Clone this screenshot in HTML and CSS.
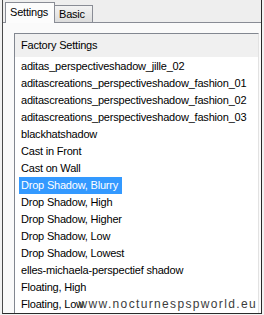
FILE: index.html
```html
<!DOCTYPE html>
<html>
<head>
<meta charset="utf-8">
<link rel="stylesheet" href="styles.css">
</head>
<body>
<div class="window">
  <div class="tabs">
    <div class="tab active">Settings</div>
    <div class="tab">Basic</div>
  </div>
  <div class="panel">
    <div class="list">
      <div class="header">Factory Settings</div>
      <div class="items">
        <div class="item"><span>aditas_perspectiveshadow_jille_02</span></div>
        <div class="item"><span>aditascreations_perspectiveshadow_fashion_01</span></div>
        <div class="item"><span>aditascreations_perspectiveshadow_fashion_02</span></div>
        <div class="item"><span>aditascreations_perspectiveshadow_fashion_03</span></div>
        <div class="item"><span>blackhatshadow</span></div>
        <div class="item"><span>Cast in Front</span></div>
        <div class="item"><span>Cast on Wall</span></div>
        <div class="item selected"><span>Drop Shadow, Blurry</span></div>
        <div class="item"><span>Drop Shadow, High</span></div>
        <div class="item"><span>Drop Shadow, Higher</span></div>
        <div class="item"><span>Drop Shadow, Low</span></div>
        <div class="item"><span>Drop Shadow, Lowest</span></div>
        <div class="item"><span>elles-michaela-perspectief shadow</span></div>
        <div class="item"><span>Floating, High</span></div>
        <div class="item"><span>Floating, Low</span></div>
      </div>
    </div>
  </div>
  <div class="watermark">www.nocturnespspworld.eu</div>
</div>
</body>
</html>
```
FILE: styles.css
```css
html, body {
  margin: 0;
  padding: 0;
}
body {
  width: 264px;
  height: 315px;
  background: #f2f2f2;
  overflow: hidden;
  font-family: "Liberation Sans", Arial, sans-serif;
  font-size: 11px;
  letter-spacing: -0.2px;
  color: #000;
}
.window {
  position: relative;
  margin-left: 2px;
  width: 258px;
  height: 313px;
  border-left: 1px solid #4a4a4a;
  border-right: 1px solid #2a2a2a;
  border-bottom: 1px solid #2a2a2a;
  background: #eeeeee;
  display: flex;
  flex-direction: column;
  overflow: hidden;
}
.tabs {
  height: 22px;
  display: flex;
  align-items: flex-end;
  padding-left: 2px;
  position: relative;
  z-index: 2;
}
.tab {
  box-sizing: border-box;
  height: 17px;
  width: 38px;
  border: 1px solid #898c95;
  border-bottom: none;
  border-left: none;
  background: linear-gradient(#f3f3f3, #dcdcdc);
  padding-left: 4px;
  line-height: 16px;
}
.tab.active {
  height: 21px;
  width: 50px;
  margin-bottom: -1px;
  border-left: 1px solid #898c95;
  border-right: 1px solid #898c95;
  background: #fcfcfc;
  padding-left: 4px;
  line-height: 19px;
}
.panel {
  flex: 1;
  border-top: 1px solid #898c95;
  background: #fafafa;
  padding: 10px 0 0 11px;
  display: flex;
  flex-direction: column;
  min-height: 0;
}
.list {
  flex: 1;
  width: 243px;
  border-left: 1px solid #828790;
  border-top: 1px solid #828790;
  border-right: 1px solid #e2e2e2;
  background: #fff;
  display: flex;
  flex-direction: column;
  min-height: 0;
}
.header {
  height: 23px;
  line-height: 23px;
  padding-left: 6px;
  background: #f0f0f0;
}
.items {
  padding-top: 1px;
}
.item {
  height: 17px;
  line-height: 17px;
  white-space: nowrap;
  padding-left: 4px;
}
.item span {
  display: inline-block;
  padding: 0 4px 0 2px;
}
.item.selected span {
  background: #3399ff;
  color: #fff;
}
.watermark {
  position: absolute;
  right: 4px;
  bottom: 2px;
  font-family: "Liberation Sans", Arial, sans-serif;
  font-size: 12px;
  letter-spacing: 1.35px;
  color: #3c3c3c;
  line-height: 14px;
}
```
